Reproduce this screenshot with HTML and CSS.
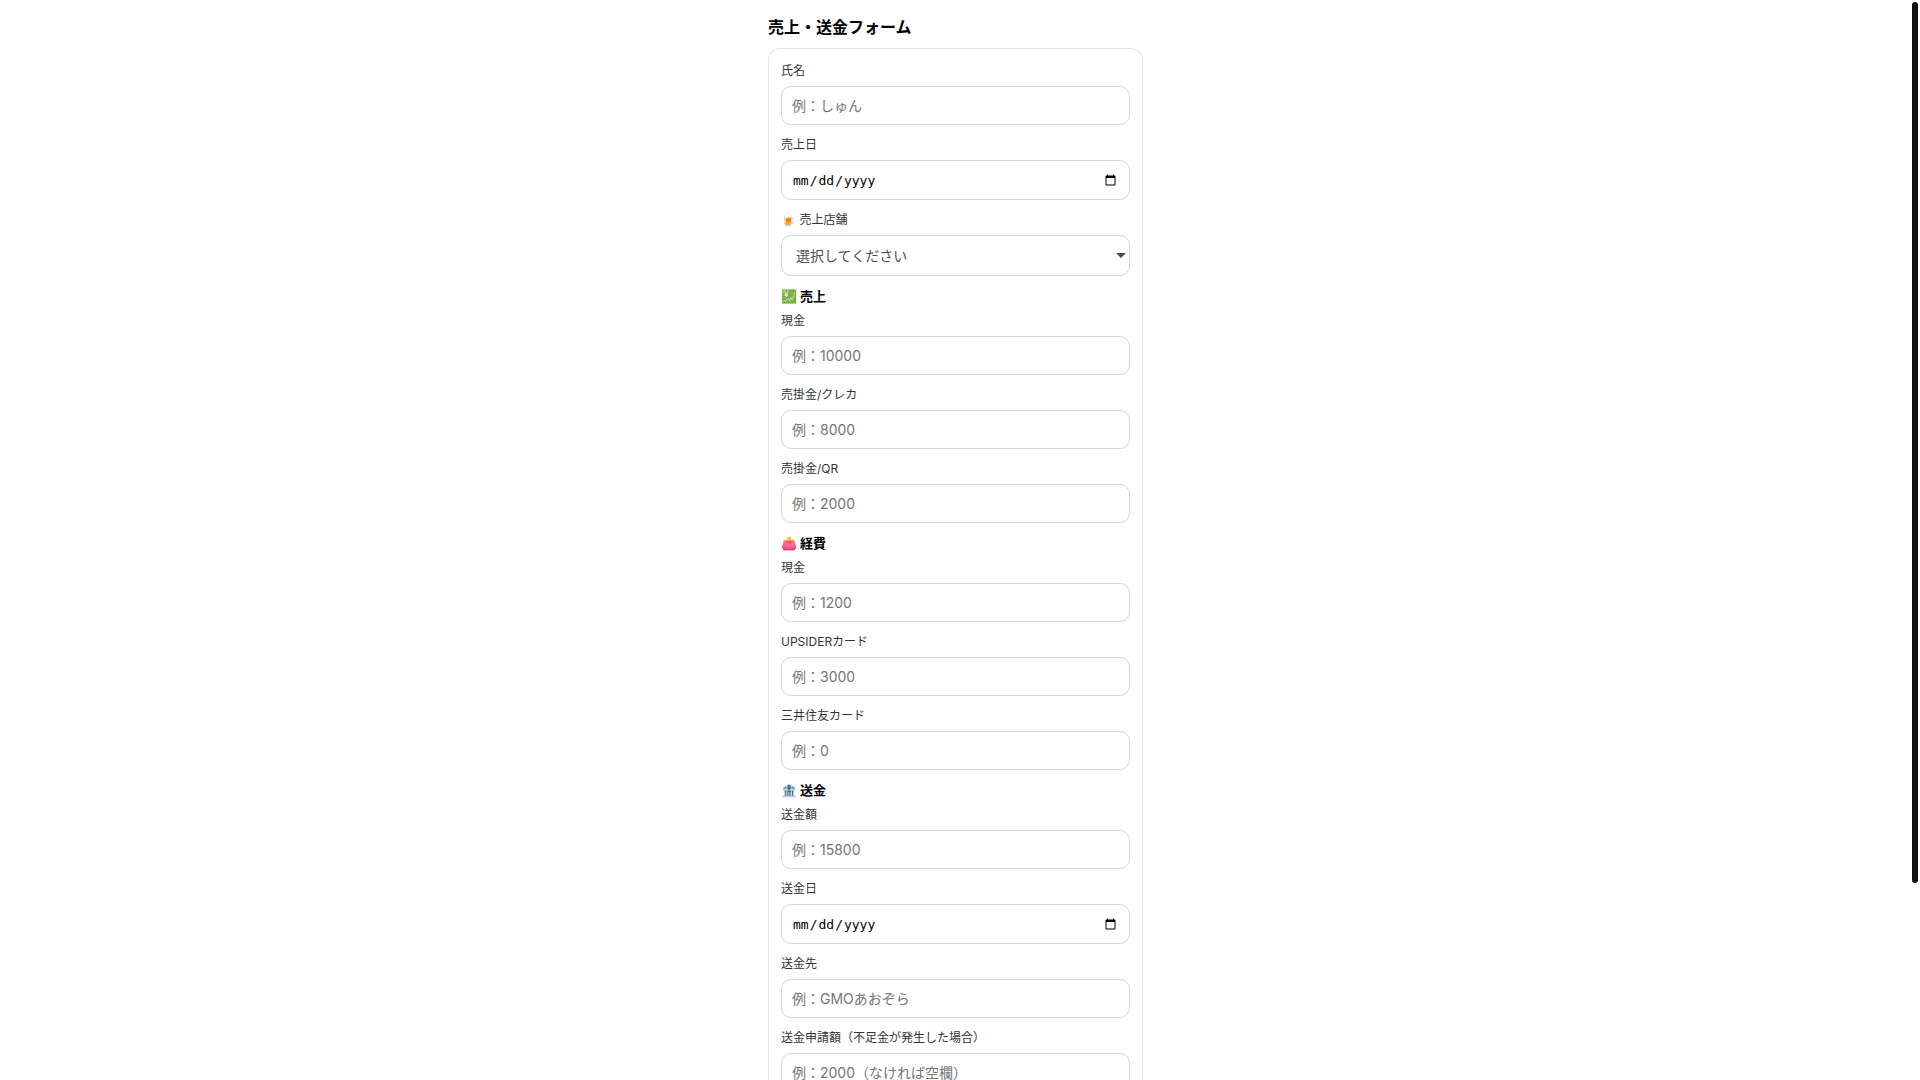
FILE: index.html
```html
<!DOCTYPE html>
<html lang="ja">
<head>
<meta charset="utf-8">
<meta name="viewport" content="width=device-width, initial-scale=1">
<title>売上・送金フォーム</title>
<link rel="stylesheet" href="styles.css">
</head>
<body>
<div class="layout">
  <main class="page">
    <h1 class="title">売上・送金フォーム</h1>
    <form class="card">
      <div class="field">
        <label class="label" for="name">氏名</label>
        <input class="control" id="name" type="text" placeholder="例：しゅん">
      </div>
      <div class="field">
        <label class="label" for="sales-date">売上日</label>
        <input class="control control-date" id="sales-date" type="date">
      </div>
      <div class="field">
        <label class="label" for="store">🍺 売上店舗</label>
        <div class="select-wrap">
          <select class="control control-select" id="store">
            <option>選択してください</option>
          </select>
          <svg class="arrow" viewBox="0 0 10 5" aria-hidden="true"><path d="M0 0h10L5 5z"/></svg>
        </div>
      </div>

      <section class="group">
        <h2 class="heading">💹 売上</h2>
        <div class="field">
          <label class="label" for="sales-cash">現金</label>
          <input class="control" id="sales-cash" type="text" inputmode="numeric" placeholder="例：10000">
        </div>
        <div class="field">
          <label class="label" for="sales-card">売掛金/クレカ</label>
          <input class="control" id="sales-card" type="text" inputmode="numeric" placeholder="例：8000">
        </div>
        <div class="field">
          <label class="label" for="sales-qr">売掛金/QR</label>
          <input class="control" id="sales-qr" type="text" inputmode="numeric" placeholder="例：2000">
        </div>
      </section>

      <section class="group">
        <h2 class="heading">👛 経費</h2>
        <div class="field">
          <label class="label" for="cost-cash">現金</label>
          <input class="control" id="cost-cash" type="text" inputmode="numeric" placeholder="例：1200">
        </div>
        <div class="field">
          <label class="label" for="cost-upsider">UPSIDERカード</label>
          <input class="control" id="cost-upsider" type="text" inputmode="numeric" placeholder="例：3000">
        </div>
        <div class="field">
          <label class="label" for="cost-smbc">三井住友カード</label>
          <input class="control" id="cost-smbc" type="text" inputmode="numeric" placeholder="例：0">
        </div>
      </section>

      <section class="group">
        <h2 class="heading">🏦 送金</h2>
        <div class="field">
          <label class="label" for="send-amount">送金額</label>
          <input class="control" id="send-amount" type="text" inputmode="numeric" placeholder="例：15800">
        </div>
        <div class="field">
          <label class="label" for="send-date">送金日</label>
          <input class="control control-date" id="send-date" type="date">
        </div>
        <div class="field">
          <label class="label" for="send-to">送金先</label>
          <input class="control" id="send-to" type="text" placeholder="例：GMOあおぞら">
        </div>
        <div class="field">
          <label class="label" for="send-request">送金申請額（不足金が発生した場合）</label>
          <input class="control" id="send-request" type="text" inputmode="numeric" placeholder="例：2000（なければ空欄）">
        </div>
      </section>

      <button class="submit" type="submit">送信</button>
    </form>
  </main>
  <div class="rail" aria-hidden="true"><div class="thumb"></div></div>
</div>
</body>
</html>
```
FILE: styles.css
```css
* {
  box-sizing: border-box;
}

html {
  scrollbar-width: none;
}

body {
  margin: 0;
  background: #fff;
  color: #000;
  font-family: Inter, "Noto Sans CJK JP", sans-serif;
}

.layout {
  display: grid;
  grid-template-columns: 1fr 9px;
  align-items: start;
}

.rail {
  position: sticky;
  top: 0;
  height: 100vh;
  padding: 2px 2px 4px 1px;
}

.thumb {
  height: 82%;
  border-radius: 3px;
  background: #0f1011;
}

.page {
  width: 100%;
  max-width: 399px;
  margin: 0 auto;
  padding: 16px 12px 156px;
}

.title {
  margin: 0 0 10px;
  font-size: 16px;
  line-height: 22px;
  font-weight: 700;
}

.card {
  display: flex;
  flex-direction: column;
  gap: 10px;
  padding: 12px;
  border: 1px solid #e5e5e5;
  border-radius: 12px;
}

.group {
  display: flex;
  flex-direction: column;
  gap: 10px;
}

.heading {
  margin: 0 0 -6px;
  font-size: 13px;
  line-height: 21px;
  font-weight: 700;
}

.field {
  display: flex;
  flex-direction: column;
  gap: 6px;
}

.label {
  color: #333;
  font-size: 12px;
  line-height: 19px;
}

.control {
  width: 100%;
  height: 39px;
  margin: 0;
  padding: 0 10px;
  border: 1px solid #d6d6d6;
  border-radius: 10px;
  background: #fff;
  color: #000;
  font-family: inherit;
  font-size: 14px;
}

.control::placeholder {
  color: #757575;
}

.control-date {
  height: 40px;
  font-family: "DejaVu Sans Mono", monospace;
  font-size: 13px;
}

.select-wrap {
  display: grid;
  align-items: center;
}

.control-select {
  grid-area: 1 / 1;
  height: 41px;
  padding: 0 14px;
  color: #4b4f52;
  appearance: none;
}

.arrow {
  grid-area: 1 / 1;
  justify-self: end;
  width: 10px;
  height: 5px;
  margin-right: 4px;
  fill: #4b4f52;
  pointer-events: none;
}

.submit {
  height: 40px;
  margin-top: 8px;
  border: 0;
  border-radius: 10px;
  background: #111;
  color: #fff;
  font-family: inherit;
  font-size: 14px;
  font-weight: 700;
}
```
